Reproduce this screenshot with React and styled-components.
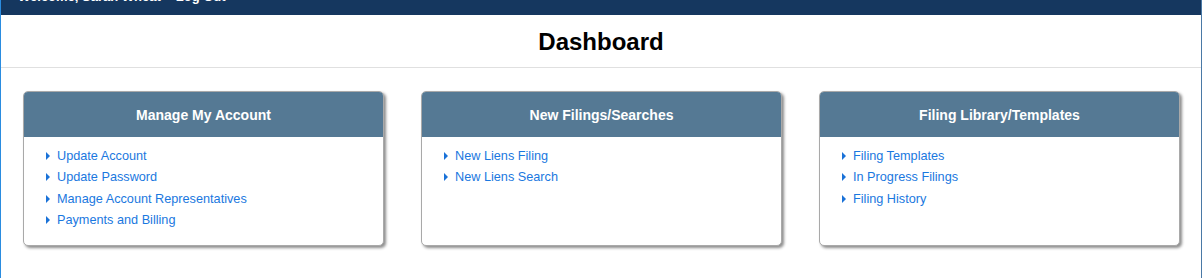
import React from 'react'
import styled, { createGlobalStyle } from 'styled-components'

const GlobalStyle = createGlobalStyle`
  html, body {
    margin: 0;
    padding: 0;
    background: #fff;
    overflow: hidden;
  }
  body {
    font-family: 'Liberation Sans', Arial, sans-serif;
  }
`

const sections = [
  {
    title: 'Manage My Account',
    links: ['Update Account', 'Update Password', 'Manage Account Representatives', 'Payments and Billing'],
  },
  {
    title: 'New Filings/Searches',
    links: ['New Liens Filing', 'New Liens Search'],
  },
  {
    title: 'Filing Library/Templates',
    links: ['Filing Templates', 'In Progress Filings', 'Filing History'],
  },
]

const App = () => {
  return (
    <Page>
      <GlobalStyle />
      <TopBar>
        <Welcome>Welcome, Sarah Wheat</Welcome>
        <LogOut href="#">Log Out</LogOut>
      </TopBar>
      <Frame>
        <Title>Dashboard</Title>
        <Cards>
          {sections.map((s) => (
            <Card key={s.title}>
              <CardHead>{s.title}</CardHead>
              <LinkList>
                {s.links.map((l) => (
                  <Item key={l}>
                    <Caret />
                    <ItemLink href="#">{l}</ItemLink>
                  </Item>
                ))}
              </LinkList>
            </Card>
          ))}
        </Cards>
      </Frame>
    </Page>
  )
}

const Page = styled.div`
  width: 1202px;
  margin-top: -30px;
`
const TopBar = styled.div`
  height: 45px;
  background: #15375f;
  display: flex;
  align-items: flex-end;
  gap: 15px;
  padding: 0 0 11px 17px;
  box-sizing: border-box;
  border-left: 1px solid #2a8ce0;
  border-right: 1px solid #4a79a6;
`
const Welcome = styled.span`
  color: #fff;
  font-weight: bold;
  font-size: 13px;
  line-height: 15px;
`
const LogOut = styled.a`
  color: #fff;
  font-weight: bold;
  font-size: 13px;
  line-height: 15px;
  text-decoration: none;
`
const Frame = styled.div`
  border-left: 1px solid #2a8ce0;
  border-right: 1px solid #4a79a6;
  height: 263px;
  box-sizing: border-box;
`
const Title = styled.h1`
  margin: 0;
  height: 53px;
  box-sizing: border-box;
  border-bottom: 1px solid #e0e0e0;
  text-align: center;
  font-size: 24px;
  font-weight: bold;
  color: #000;
  line-height: 54px;
`
const Cards = styled.div`
  display: grid;
  grid-template-columns: repeat(3, 361px);
  column-gap: 37px;
  padding: 23px 0 0 22px;
`
const Card = styled.div`
  height: 155px;
  box-sizing: border-box;
  border: 1px solid #a9a9a9;
  border-radius: 5px;
  overflow: hidden;
  box-shadow: 2px 2px 3px rgba(0, 0, 0, 0.45);
  background: #fff;
`
const CardHead = styled.div`
  height: 45px;
  background: #557994;
  color: #fff;
  font-weight: bold;
  font-size: 14px;
  display: flex;
  align-items: center;
  justify-content: center;
`
const LinkList = styled.ul`
  list-style: none;
  margin: 0;
  padding: 8px 0 0 22px;
`
const Item = styled.li`
  display: flex;
  align-items: center;
  height: 21.5px;
`
const Caret = styled.span`
  width: 0;
  height: 0;
  border-top: 4px solid transparent;
  border-bottom: 4px solid transparent;
  border-left: 4px solid #1a72d8;
  margin-right: 7px;
`
const ItemLink = styled.a`
  color: #1a78e0;
  font-size: 12.7px;
  text-decoration: none;
`

export default App
